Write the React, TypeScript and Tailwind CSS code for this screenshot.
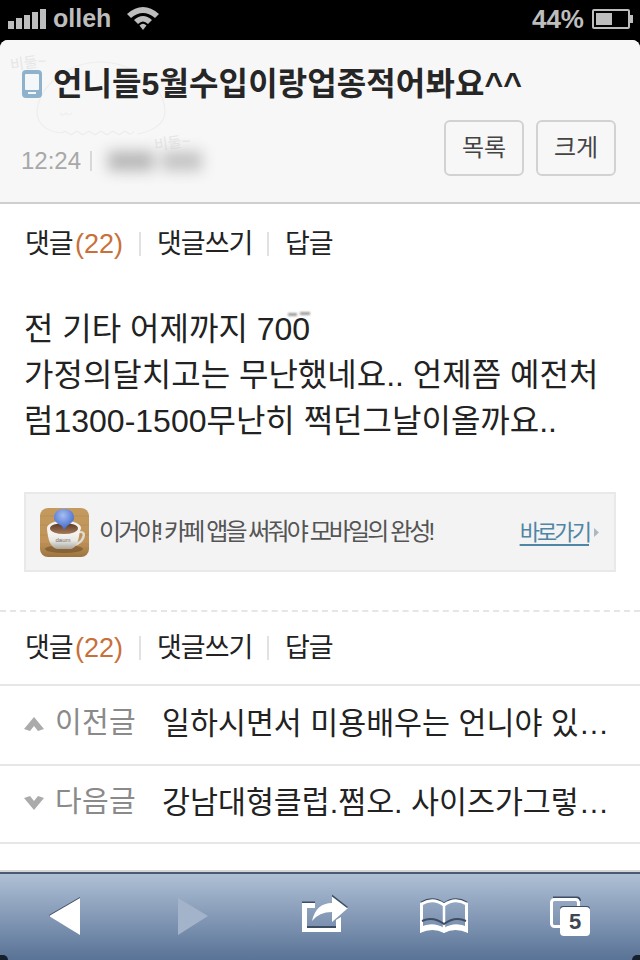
const KR = "font-['Liberation_Sans','Noto_Sans_CJK_KR',sans-serif]";

function Actions() {
  return (
    <div className="flex items-center h-[80px] pl-[25px] text-[27px] tracking-[-1px] text-[#222] shrink-0 whitespace-nowrap">
      <span className="w-[50px]">댓글</span>
      <span className="text-[#c8703a] w-[47px] tracking-[0px]">(22)</span>
      <span className="w-[2px] h-[24px] bg-[#e2e2e2] ml-[17px] mr-[16px]" />
      <span className="w-[95px]">댓글쓰기</span>
      <span className="w-[2px] h-[24px] bg-[#e2e2e2] ml-[15px] mr-[16px]" />
      <span>답글</span>
    </div>
  );
}

function CoffeeIcon() {
  return (
    <svg width="49" height="49" viewBox="0 0 49 49" className="shrink-0">
      <defs>
        <linearGradient id="wood" x1="0" y1="0" x2="0" y2="1">
          <stop offset="0" stopColor="#c49a5e" />
          <stop offset="0.7" stopColor="#c09358" />
          <stop offset="1" stopColor="#9c7440" />
        </linearGradient>
        <radialGradient id="bubble" cx="0.45" cy="0.3" r="0.7">
          <stop offset="0" stopColor="#a5bdf0" />
          <stop offset="1" stopColor="#3d66cc" />
        </radialGradient>
        <linearGradient id="cup" x1="0" y1="0" x2="0" y2="1">
          <stop offset="0" stopColor="#fdfdfb" />
          <stop offset="0.6" stopColor="#e9e7e2" />
          <stop offset="1" stopColor="#a9a59c" />
        </linearGradient>
        <linearGradient id="coffee" x1="0" y1="0" x2="0" y2="1">
          <stop offset="0" stopColor="#5a3822" />
          <stop offset="1" stopColor="#a47a5a" />
        </linearGradient>
      </defs>
      <rect width="49" height="49" rx="8" fill="url(#wood)" />
      <path d="M0 8H49M0 17H49M0 27H49M0 36H49" stroke="#aa8048" strokeWidth="0.7" opacity="0.5" />
      <ellipse cx="24" cy="41" rx="19" ry="4" fill="#6b4a26" opacity="0.55" />
      <path d="M38 24 q8 -1 5 6 q-2 5 -9 7" fill="none" stroke="#dedbd5" strokeWidth="2.5" />
      <path d="M7 20 Q8 39 17 41 L31 41 Q39 39 40 20Z" fill="url(#cup)" />
      <ellipse cx="24" cy="20" rx="17" ry="7.5" fill="#f4f2ee" />
      <ellipse cx="24" cy="20.5" rx="14" ry="5.5" fill="url(#coffee)" />
      <text x="23" y="34" fontSize="6" textAnchor="middle" fill="#6c6c6c">daum</text>
      <path d="M14 10 C14 3 19 1 24 1 C29 1 34 3 34 10 C34 14 29 16 27 18 L24 22 L22 18 C19 16 14 14 14 10Z" fill="url(#bubble)" />
    </svg>
  );
}

function NavRow({ up, label, text, h }: { up: boolean; label: string; text: string; h: string }) {
  return (
    <div className={`flex items-center ${h} pb-[3px] pl-[24px] border-b-2 border-[#e6e6e6]`}>
      <svg width="20" height="14" viewBox="0 0 20 14" className="shrink-0">
        <path d={up ? "M10 0 L20 12 L14 14 L10 9 L6 14 L0 12Z" : "M0 2 L6 0 L10 5 L14 0 L20 2 L10 14Z"} fill="#ababab" />
      </svg>
      <span className="ml-[11px] text-[29px] text-[#8a8a8a] shrink-0 w-[107px] tracking-[0.3px]">{label}</span>
      <span className="text-[30.4px] text-[#222] whitespace-nowrap">{text}</span>
    </div>
  );
}

export default function App() {
  return (
    <div className={`w-[640px] h-[960px] overflow-hidden bg-black flex flex-col ${KR}`}>
      {/* status bar */}
      <div className="h-[40px] relative flex items-center pl-[8px] pr-[7px] text-[#bdbdbd] shrink-0">
        <div className="flex items-end gap-[2px] h-[20px] mt-[-2px]">
          <span className="w-[6px] h-[8px] bg-[#bdbdbd]" />
          <span className="w-[6px] h-[11px] bg-[#bdbdbd]" />
          <span className="w-[6px] h-[14px] bg-[#bdbdbd]" />
          <span className="w-[6px] h-[17px] bg-[#bdbdbd]" />
          <span className="w-[6px] h-[20px] bg-[#bdbdbd]" />
        </div>
        <span className="ml-[7px] text-[25px] font-bold leading-none mt-[-3px]">olleh</span>
        <svg width="32" height="24" viewBox="0 0 32 24" className="ml-[16px] mt-[-4px]">
          <path d="M0 8 Q16 -6 32 8 L28 12 Q16 2 4 12Z" fill="#bdbdbd" />
          <path d="M7 14 Q16 6 25 14 L21 18 Q16 13 11 18Z" fill="#bdbdbd" />
          <path d="M12.5 19.5 Q16 16 19.5 19.5 L16 24Z" fill="#bdbdbd" />
        </svg>
        <span className="ml-auto text-[26px] font-bold leading-none mt-[-3px]">44%</span>
        <div className="ml-[8px] flex items-center mt-[-3px]">
          <div className="w-[38px] h-[20px] border-2 border-[#bdbdbd] p-[2px] rounded-[2px]">
            <div className="w-[16px] h-full bg-[#bdbdbd]" />
          </div>
          <span className="w-[3px] h-[8px] bg-[#bdbdbd]" />
        </div>
      </div>

      <div className="flex-1 bg-white rounded-t-[8px] overflow-hidden flex flex-col">
        {/* header */}
        <div className="relative h-[164px] shrink-0 bg-[#f7f7f7] border-b-2 border-[#cfcfcf]">
          <svg width="210" height="115" viewBox="0 0 210 115" className="absolute left-0 top-0" fill="none" stroke="#ededed" strokeWidth="1.2">
            <path d="M37 73 C38 45 70 22 100 22 C130 22 165 45 165 72 C165 85 150 92 137 94" />
            <path d="M37 73 C38 85 48 92 62 93" />
            <path d="M62 93 q3 -3 6 0 t6 0 t6 0 t6 0 t6 0 t6 0 t6 0 t6 0 t6 0 t6 0 t6 0 t6 -2" />
            <path d="M60 73 q3 4 6 0 q3 4 6 0" />
          </svg>
          <span className="absolute left-[10px] top-[15px] text-[15px] leading-none text-[#e6e6e6] rotate-[-8deg]">비둘~</span>
          <span className="absolute left-[154px] top-[95px] text-[15px] leading-none text-[#e6e6e6] rotate-[-8deg]">비둘~</span>
          <div className="relative flex items-center pt-[26px] pl-[22px]">
            <div className="w-[20px] h-[28px] rounded-[4px] bg-[#8fb2cc] flex flex-col items-center pt-[4px]">
              <div className="w-[14px] h-[16px] bg-[#f4f7fa] rounded-[1px]" />
              <div className="w-[8px] h-[2px] bg-[#f4f7fa] mt-[2px]" />
            </div>
            <h1 className="ml-[11px] text-[32px] font-bold text-[#262626] leading-[36px] tracking-[0.1px] whitespace-nowrap">언니들5월수입이랑업종적어봐요^^</h1>
          </div>
          <div className="relative flex items-center justify-between pl-[21px] pr-[24px] mt-[18px]">
            <div className="flex items-center pt-[26px]">
              <span className="text-[24px] text-[#a8a8a8] leading-none">12:24</span>
              <span className="w-[2px] h-[20px] bg-[#d8d8d8] ml-[9px]" />
              <div className="ml-[16px] flex gap-[8px] blur-[7px]">
                <span className="w-[46px] h-[20px] bg-[#b8b8b8]" />
                <span className="w-[40px] h-[20px] bg-[#c4c4c4]" />
              </div>
            </div>
            <div className="flex gap-[12px]">
              <div className="w-[80px] h-[56px] border-2 border-[#d2d2d2] rounded-[6px] flex items-center justify-center text-[24px] text-[#444]">목록</div>
              <div className="w-[80px] h-[56px] border-2 border-[#d2d2d2] rounded-[6px] flex items-center justify-center text-[24px] text-[#444]">크게</div>
            </div>
          </div>
        </div>

        <Actions />

        <div className="relative pl-[24px] pt-[22px] text-[32px] leading-[46px] text-[#222] h-[208px] shrink-0 whitespace-nowrap">
          전 기타 어제까지 700<br />
          가정의달치고는 무난했네요.. 언제쯤 예전처<br />
          럼1300-1500무난히 쩍던그날이올까요..
          <span className="absolute left-[288px] top-[29px] w-[9px] h-[3px] bg-[#9a9a9a] blur-[1px]" />
          <span className="absolute left-[300px] top-[28px] w-[10px] h-[3px] bg-[#9a9a9a] blur-[1px]" />
        </div>

        {/* banner */}
        <div className="mx-[24px] h-[80px] shrink-0 bg-[#f3f3f3] border-2 border-[#e9e9e9] flex items-center pl-[14px] pr-[15px]">
          <CoffeeIcon />
          <span className="ml-[10px] text-[24px] tracking-[-2.9px] text-[#555] whitespace-nowrap">이거야! 카페 앱을 써줘야 모바일의 완성!</span>
          <span className="ml-auto text-[22px] tracking-[-2.9px] text-[#4f85a5] underline underline-offset-4 mr-[-1px]">바로가기</span>
          <svg width="5" height="9" viewBox="0 0 5 9" className="ml-[6px]">
            <path d="M0 0 L5 4.5 L0 9Z" fill="#a9b8c2" />
          </svg>
        </div>

        <div className="mt-[38px] border-t-2 border-dashed border-[#e6e6e6] shrink-0" />

        <div className="h-[72px] shrink-0 flex flex-col justify-center">
          <Actions />
        </div>

        <div className="border-t-2 border-[#e6e6e6] shrink-0">
          <NavRow up h="h-[80px]" label="이전글" text="일하시면서 미용배우는 언니야 있…" />
          <NavRow up={false} h="h-[78px]" label="다음글" text="강남대형클럽.쩜오. 사이즈가그렇…" />
        </div>

        <div className="flex-1 bg-white" />

        {/* toolbar */}
        <div className="h-[88px] shrink-0 relative border-t-2 border-[#4a5a70] bg-gradient-to-b from-[#afc0d5] via-[#8499b6] to-[#597396]">
          <div className="absolute left-0 right-0 top-[-4px] h-[2px] bg-[#d5d5d5]" />
          <div className="absolute left-0 bottom-0 w-[8px] h-[5px] bg-[#16202c] rounded-tr-[8px]" />
          <div className="absolute right-0 bottom-0 w-[8px] h-[5px] bg-[#16202c] rounded-tl-[8px]" />
          <svg width="640" height="86" viewBox="0 874 640 86" className="absolute left-0 top-0">
            <path d="M49 915 L80 897 L80 899 L49 917Z" fill="#3d4d64" />
            <path d="M49 916 L80 898 L80 935Z" fill="#fff" />
            <path d="M178 898 L208 916 L178 935Z" fill="#a3b3ca" />
            <path d="M302 903 H315 V908 H307 V927 H336 V920 L341 917 V932 H302Z" fill="#fff" />
            <path d="M302 901.5 H315 V903 H302Z M307 926 H336 V928 H307Z" fill="#3d4d64" />
            <path d="M332 896 L348 908 L332 922 L332 912 Q319 912 312 921 Q316 903 332 903Z" fill="#fff" />
            <path d="M332 894.5 L348 907 L347 908 L332 896.5Z" fill="#3d4d64" />
            <path d="M421 904 Q433 897 444 905 Q455 897 467 904" fill="none" stroke="#3d4d64" strokeWidth="2" transform="translate(0 -1.5)" />
            <path d="M421.5 904 Q433 897 444 905 Q455 897 466.5 904 L466.5 930 Q455 923 444 931 Q433 923 421.5 930Z" fill="none" stroke="#fff" strokeWidth="3" />
            <path d="M444 905 V930" stroke="#fff" strokeWidth="2.5" />
            <path d="M422 921 Q433 916 444 924 Q455 916 466 921" fill="none" stroke="#3d4d64" strokeWidth="2" />
            <path d="M420 927 Q433 921 444 928 Q455 921 468 927 L468 933 Q455 927 444 933 Q433 927 420 933Z" fill="#fff" />
            <path d="M553 897.5 H577 Q580 897.5 580 901" fill="none" stroke="#3d4d64" strokeWidth="2" />
            <rect x="551.5" y="899.5" width="27" height="27" rx="3" fill="none" stroke="#fff" strokeWidth="3" />
            <path d="M563 906 H587 Q590 906 590 909 H560 Q560 906 563 906Z" fill="#3d4d64" />
          </svg>
          <div className="absolute left-[560px] top-[33px] w-[30px] h-[29px] rounded-[4px] bg-white flex items-center justify-center text-[22px] font-bold text-[#3d4654] leading-none">5</div>
        </div>
      </div>
    </div>
  );
}
